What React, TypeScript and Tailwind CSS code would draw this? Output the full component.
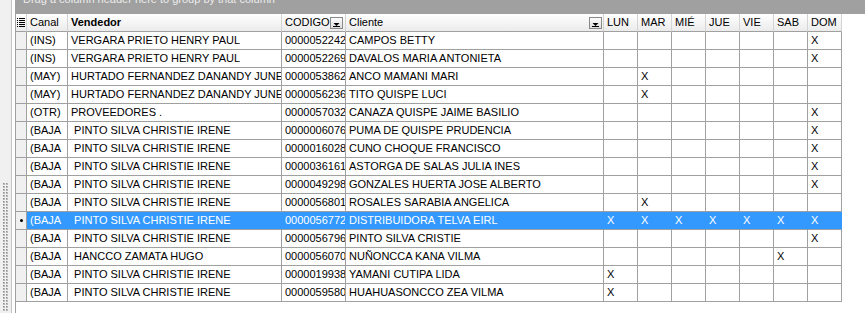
import React from 'react';

type Row = {
  canal: string;
  vendedor: string;
  codigo: string;
  cliente: string;
  dias: number[];
  sel?: boolean;
};

const DIAS = ['LUN', 'MAR', 'MIÉ', 'JUE', 'VIE', 'SAB', 'DOM'];

const rows: Row[] = [
  { canal: '(INS)', vendedor: 'VERGARA PRIETO HENRY PAUL', codigo: '0000052242', cliente: 'CAMPOS BETTY', dias: [6] },
  { canal: '(INS)', vendedor: 'VERGARA PRIETO HENRY PAUL', codigo: '0000052269', cliente: 'DAVALOS MARIA ANTONIETA', dias: [6] },
  { canal: '(MAY)', vendedor: 'HURTADO FERNANDEZ DANANDY JUNETH', codigo: '0000053862', cliente: 'ANCO MAMANI MARI', dias: [1] },
  { canal: '(MAY)', vendedor: 'HURTADO FERNANDEZ DANANDY JUNETH', codigo: '0000056236', cliente: 'TITO QUISPE LUCI', dias: [1] },
  { canal: '(OTR)', vendedor: 'PROVEEDORES .', codigo: '0000057032', cliente: 'CANAZA QUISPE JAIME BASILIO', dias: [6] },
  { canal: '(BAJA', vendedor: ' PINTO SILVA CHRISTIE IRENE', codigo: '0000006076', cliente: 'PUMA DE QUISPE PRUDENCIA', dias: [6] },
  { canal: '(BAJA', vendedor: ' PINTO SILVA CHRISTIE IRENE', codigo: '0000016028', cliente: 'CUNO CHOQUE FRANCISCO', dias: [6] },
  { canal: '(BAJA', vendedor: ' PINTO SILVA CHRISTIE IRENE', codigo: '0000036161', cliente: 'ASTORGA DE SALAS JULIA INES', dias: [6] },
  { canal: '(BAJA', vendedor: ' PINTO SILVA CHRISTIE IRENE', codigo: '0000049298', cliente: 'GONZALES HUERTA JOSE ALBERTO', dias: [6] },
  { canal: '(BAJA', vendedor: ' PINTO SILVA CHRISTIE IRENE', codigo: '0000056801', cliente: 'ROSALES SARABIA ANGELICA', dias: [1] },
  { canal: '(BAJA', vendedor: ' PINTO SILVA CHRISTIE IRENE', codigo: '0000056772', cliente: 'DISTRIBUIDORA TELVA EIRL', dias: [0, 1, 2, 3, 4, 5, 6], sel: true },
  { canal: '(BAJA', vendedor: ' PINTO SILVA CHRISTIE IRENE', codigo: '0000056796', cliente: 'PINTO SILVA CRISTIE', dias: [6] },
  { canal: '(BAJA', vendedor: ' HANCCO ZAMATA HUGO', codigo: '0000056070', cliente: 'NUÑONCCA KANA VILMA', dias: [5] },
  { canal: '(BAJA', vendedor: ' PINTO SILVA CHRISTIE IRENE', codigo: '0000019938', cliente: 'YAMANI CUTIPA LIDA', dias: [0] },
  { canal: '(BAJA', vendedor: ' PINTO SILVA CHRISTIE IRENE', codigo: '0000059580', cliente: 'HUAHUASONCCO ZEA VILMA', dias: [0] },
];

const FilterButton = () => (
  <svg width="13" height="12" viewBox="0 0 13 12" className="shrink-0">
    <defs>
      <linearGradient id="fb" x1="0" y1="0" x2="0" y2="1">
        <stop offset="0" stopColor="#ffffff" />
        <stop offset="1" stopColor="#dcdcdc" />
      </linearGradient>
    </defs>
    <rect x="0.5" y="0.5" width="12" height="11" fill="url(#fb)" stroke="#8a8a8a" />
    <path d="M3.5 6h6l-3 3z" fill="#000" />
    <rect x="3" y="9" width="7" height="1" fill="#000" />
  </svg>
);

const ListIcon = () => (
  <svg width="8" height="9" viewBox="0 0 8 9">
    {[0, 2, 4, 6, 8].map((y) => (
      <g key={y}>
        <rect x="0" y={y} width="1" height="1" fill="#000" />
        <rect x="2" y={y} width="6" height="1" fill="#000" />
      </g>
    ))}
  </svg>
);

const Splitter = () => (
  <svg width="6" height="128" viewBox="0 0 6 128">
    {Array.from({ length: 43 }).map((_, i) => (
      <g key={i}>
        <rect x="0" y={i * 3} width="2" height="2" fill="#b8b8b8" />
        <rect x="3" y={i * 3} width="2" height="2" fill="#b8b8b8" />
        <rect x="0" y={i * 3} width="1" height="1" fill="#8c8c8c" />
        <rect x="3" y={i * 3} width="1" height="1" fill="#8c8c8c" />
      </g>
    ))}
  </svg>
);

const GRID =
  'grid grid-cols-[11px_41px_214px_64px_258px_34px_34px_34px_34px_34px_34px_34px]';

const cellCls =
  'border-r border-b border-[#a0a0a0] px-[3px] leading-[17px] overflow-hidden whitespace-pre';
const selCls =
  'border-r border-b border-r-[#3399ff] border-b-[#a0a0a0] bg-[#3399ff] text-white px-[3px] leading-[17px] overflow-hidden whitespace-pre';
const headCls =
  'border-r border-b border-r-[#d4d4d4] border-b-[#a0a0a0] bg-linear-to-b from-white to-[#ebebeb] px-[3px] leading-[17px] overflow-hidden whitespace-pre flex items-center';

export default function App() {
  return (
    <div className="flex w-[865px] h-[313px] overflow-hidden bg-white text-[11px] text-black font-['Liberation_Sans',Arial,sans-serif]">
      <div className="w-[12px] shrink-0 bg-[#f0f0f0] border-r border-[#c4c4c4] flex flex-col justify-end pl-[3px] pb-[2px]">
        <Splitter />
      </div>
      <div className="w-[3px] shrink-0" />
      <div className="flex-1 flex flex-col border-l border-[#a0a0a0]">
        <div className="h-[14px] shrink-0 bg-[#a0a0a0] overflow-hidden pl-[7px]">
          <div className="-mt-[7px] leading-[13px] text-[#ececec] whitespace-nowrap">
            Drag a column header here to group by that column
          </div>
        </div>

        <div className={`${GRID} h-[18px]`}>
          <div className="border-r border-b border-r-[#d4d4d4] border-b-[#a0a0a0] bg-linear-to-b from-white to-[#ebebeb] flex items-center justify-center">
            <ListIcon />
          </div>
          <div className={headCls}>Canal</div>
          <div className={`${headCls} font-bold`}>Vendedor</div>
          <div className={`${headCls} justify-between pr-[2px]`}>
            <span>CODIGO</span>
            <FilterButton />
          </div>
          <div className={`${headCls} justify-between pr-[1px]`}>
            <span>Cliente</span>
            <FilterButton />
          </div>
          {DIAS.map((d) => (
            <div key={d} className={headCls}>
              {d}
            </div>
          ))}
        </div>

        {rows.map((r, i) => {
          const c = r.sel ? selCls : cellCls;
          return (
            <div key={i} className={`${GRID} h-[18px]`}>
              <div className="bg-[#f0f0f0] border-r border-b border-[#a0a0a0] flex items-center justify-center">
                {r.sel && <span className="w-[3px] h-[3px] rounded-full bg-black" />}
              </div>
              <div className={c}>{r.canal}</div>
              <div className={c}>{r.vendedor}</div>
              <div className={c}>{r.codigo}</div>
              <div className={c}>{r.cliente}</div>
              {DIAS.map((d, j) => (
                <div key={d} className={c}>
                  {r.dias.includes(j) ? 'X' : ''}
                </div>
              ))}
            </div>
          );
        })}
      </div>
    </div>
  );
}
